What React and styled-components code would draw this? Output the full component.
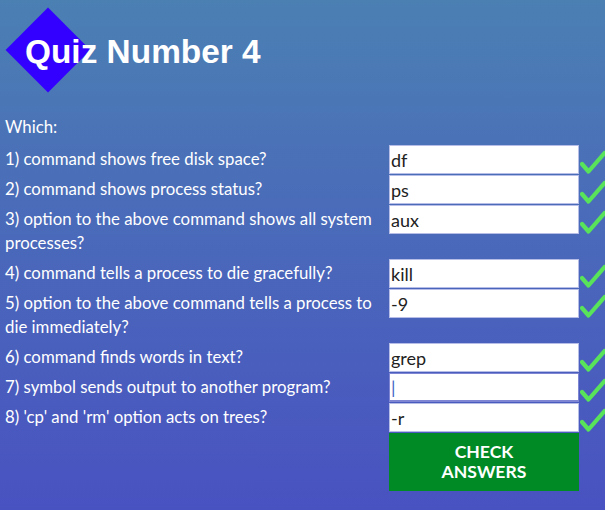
import React from "react";
import styled, { createGlobalStyle } from "styled-components";

const Global = createGlobalStyle`
  html, body { margin: 0; padding: 0; }
  body {
    width: 605px;
    height: 510px;
    overflow: hidden;
    background: linear-gradient(180deg, #4b80b3 0%, #4a6cb9 40%, #4952c1 100%);
    font-family: Lato, "Open Sans", sans-serif;
    color: #fff;
  }
`;

const Page = styled.div`
  width: 605px;
  height: 510px;
  display: flex;
  flex-direction: column;
`;

const Header = styled.header`
  position: relative;
  height: 100px;
  display: flex;
  align-items: center;
  padding-left: 25px;
  box-sizing: border-box;
`;

const Diamond = styled.div`
  position: absolute;
  left: 18px;
  top: 20px;
  width: 60px;
  height: 60px;
  background: #3300ff;
  transform: rotate(45deg);
`;

const Title = styled.h1`
  position: relative;
  margin: 3px 0 0 0;
  font-family: "Liberation Sans", Arial, sans-serif;
  font-weight: bold;
  font-size: 33.4px;
  color: #fff;
`;

const Intro = styled.div`
  font-size: 16.8px;
  line-height: 24px;
  padding: 15px 0 0 5px;
  height: 45px;
  box-sizing: border-box;
`;

const Rows = styled.div`
  display: flex;
  flex-direction: column;
`;

const Row = styled.div`
  display: grid;
  grid-template-columns: 389px 190px 26px;
  align-items: start;
`;

const Label = styled.div`
  font-size: 16.8px;
  line-height: 24px;
  padding: 2px 0 4px 5px;
`;

const Answer = styled.input`
  box-sizing: border-box;
  height: 29px;
  width: 190px;
  margin: 0 0 1px 0;
  border: 1px solid ${(p) => (p.$focus ? "#7e86d4" : "#b6bde6")};
  border-bottom-width: ${(p) => (p.$focus ? "2px" : "1px")};
  padding: 0 0 0 1px;
  font-family: Lato, sans-serif;
  font-size: 18px;
  color: ${(p) => (p.$focus ? "#3d5fc4" : "#222")};
  background: #fff;
  outline: none;
`;

const Check = styled.svg`
  margin: 5px 0 0 1px;
  width: 26px;
  height: 24px;
  display: block;
`;

const Button = styled.button`
  grid-column: 2;
  width: 190px;
  height: 58px;
  border: none;
  background: #008a25;
  color: #fff;
  font-family: Lato, sans-serif;
  font-weight: bold;
  font-size: 17.6px;
  line-height: 20px;
  padding: 0 35px;
  text-transform: uppercase;
`;

const Tick = () => (
  <Check viewBox="0 0 26 24">
    <path
      d="M2 14 L8.5 21.5 L24.5 3"
      fill="none"
      stroke="#58e35a"
      strokeWidth="4.2"
      strokeLinecap="round"
      strokeLinejoin="round"
    />
  </Check>
);

const questions = [
  ["1) command shows free disk space?", "df"],
  ["2) command shows process status?", "ps"],
  ["3) option to the above command shows all system processes?", "aux"],
  ["4) command tells a process to die gracefully?", "kill"],
  ["5) option to the above command tells a process to die immediately?", "-9"],
  ["6) command finds words in text?", "grep"],
  ["7) symbol sends output to another program?", "|", true],
  ["8) 'cp' and 'rm' option acts on trees?", "-r"],
];

export default function App() {
  return (
    <Page>
      <Global />
      <Header>
        <Diamond />
        <Title>Quiz Number 4</Title>
      </Header>
      <Intro>Which:</Intro>
      <Rows>
        {questions.map(([q, a, focus], i) => (
          <Row key={i}>
            <Label>{q}</Label>
            <Answer defaultValue={a} $focus={focus} readOnly />
            <Tick />
          </Row>
        ))}
        <Row>
          <Button>Check Answers</Button>
        </Row>
      </Rows>
    </Page>
  );
}
